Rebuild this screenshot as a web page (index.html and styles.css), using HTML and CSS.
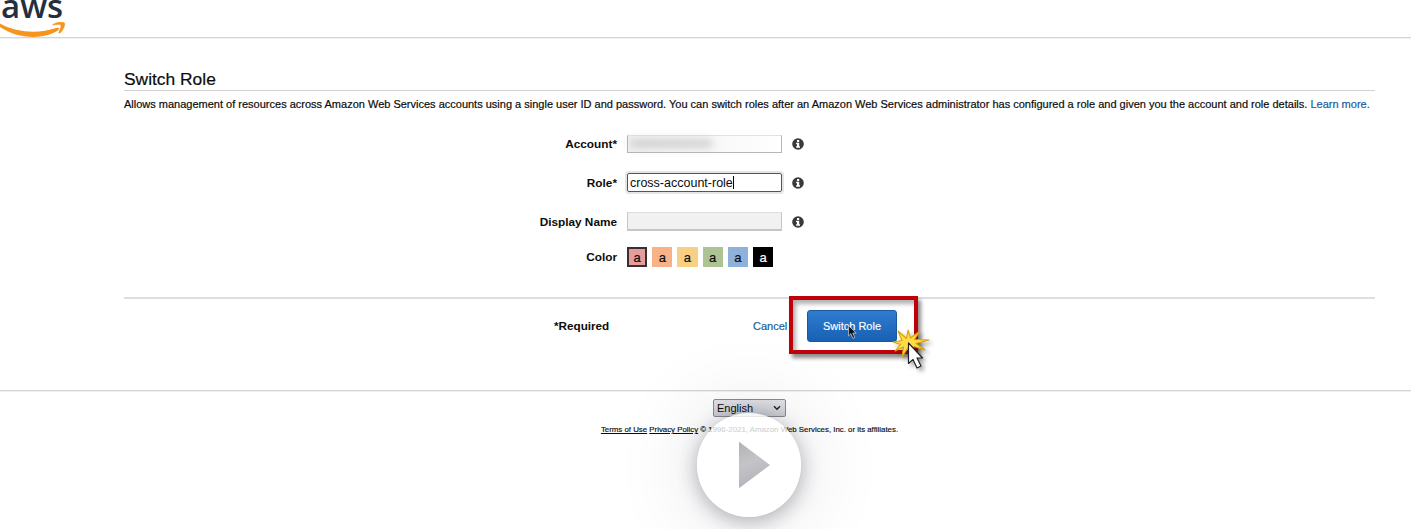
FILE: index.html
```html
<!DOCTYPE html>
<html lang="en">
<head>
<meta charset="utf-8">
<title>Switch Role</title>
<link rel="stylesheet" href="styles.css">
</head>
<body>
<svg class="symbols" aria-hidden="true">
  <symbol id="info" viewBox="0 0 12 12"><circle cx="6" cy="6" r="5.8" fill="#3a3a3a"/><path d="M5 2.100h2.200v1.800H5zM4.100 4.800h3.100v3.500H8v1.400H4.100V8.300H5V6.200h-.9z" fill="#fff"/></symbol>
</svg>
<header class="header">
  <span class="logo-text">aws</span>
  <svg class="smile" viewBox="0 0 66 18" width="66" height="18">
    <path d="M0 3.500C17 13 39 14 56 8c3-1 4 1 2 2.500C43 20 17 19 0 7z" fill="#f7941d"/>
    <path d="M53 4.500c4-3 11-2.500 11.500-1.500.8 2-1 7-4.500 10-1 .5-1.500 0-1-1 1-2.500 2.500-6 1.800-7-1-.8-5-.5-7 0-1.200.2-1.500 0-.8-.5z" fill="#f7941d" stroke="#f7941d" stroke-width=".5"/>
  </svg>
</header>
<main class="main">
  <h1 class="title">Switch Role</h1>
  <p class="intro">Allows management of resources across Amazon Web Services accounts using a single user ID and password. You can switch roles after an Amazon Web Services administrator has configured a role and given you the account and role details. <a class="link">Learn more.</a></p>
  <form class="form">
    <div class="row">
      <label class="label">Account*</label>
      <div class="field field-account"><i class="smudge"></i></div>
      <svg class="info"><use href="#info"/></svg>
    </div>
    <div class="row">
      <label class="label">Role*</label>
      <div class="field field-active">cross-account-role<i class="caret"></i></div>
      <svg class="info"><use href="#info"/></svg>
    </div>
    <div class="row">
      <label class="label">Display Name</label>
      <div class="field field-display"></div>
      <svg class="info"><use href="#info"/></svg>
    </div>
    <div class="row row-color">
      <label class="label">Color</label>
      <div class="swatches">
        <span class="swatch red">a</span><span class="swatch orange">a</span><span class="swatch yellow">a</span><span class="swatch green">a</span><span class="swatch blue">a</span><span class="swatch black">a</span>
      </div>
    </div>
  </form>
  <div class="actions">
    <b class="required">*Required</b>
    <a class="link cancel">Cancel</a>
    <div class="button">Switch Role
      <svg class="pointer-small" width="9" height="15" viewBox="0 0 9 15"><path d="M.6.7v10.200l2.300-2.200 2 4.700 1.900-.8-2-4.500h3.400z" fill="#111" stroke="#ddd" stroke-width=".7"/></svg>
      <div class="highlight"></div>
      <svg class="click" width="46" height="52" viewBox="0 0 46 52">
        <path d="M8 7l8.500 7.500L18 6l2.500 8L30 7l-5.500 8.500L39 16l-13 3.500 9 6.500-11-3.500-2 6-3.500-5.500L12 33l1.500-10L5 27l5.500-6.500L3 18l9-1.500z" fill="#ffdb45" stroke="#dba206" stroke-width="1.100" stroke-linejoin="round"/>
        <path d="M18.500 19v20.500l4.500-4 4 8.500 4-2-4-8h5.500z" fill="#fff" stroke="#222" stroke-width="1.200" stroke-linejoin="round"/>
      </svg>
    </div>
  </div>
</main>
<footer class="footer">
  <div class="select">English<svg width="8" height="6" viewBox="0 0 8 6"><path d="M1 1.300l3 3 3-3" fill="none" stroke="#222" stroke-width="1.400"/></svg></div>
  <p class="legal"><u>Terms of Use</u> <u>Privacy Policy</u> © 1996-2021, Amazon Web Services, Inc. or its affiliates.</p>
</footer>
<div class="play"><svg width="32" height="48" viewBox="0 0 32 48"><defs><linearGradient id="tri" x1="0" y1="0" x2="0.300" y2="1"><stop offset="0" stop-color="#b2b2b6"/><stop offset=".5" stop-color="#c4c4c8"/><stop offset="1" stop-color="#b2b2b9"/></linearGradient></defs><path d="M0 .7l31 23.300L0 47.300z" fill="url(#tri)"/></svg></div>
</body>
</html>
```
FILE: styles.css
```css
* { box-sizing: border-box; }
body {
  position: relative;
  margin: 0;
  height: 529px;
  overflow: hidden;
  background: #fff;
  color: #0c0c0c;
  font-family: "Liberation Sans", Arial, sans-serif;
  font-size: 11px;
}
.symbols { display: none; }
.header {
  position: relative;
  height: 38px;
  border-bottom: 1px solid #d4d4d4;
  box-shadow: 0 1px #f1f1f1;
}
.logo-text {
  position: absolute;
  left: 1px;
  top: -18px;
  font: 600 33px/48px "Open Sans", sans-serif;
  color: #252f3e;
}
.smile { position: absolute; left: 0; top: 20px; }
.main { padding: 32px 36px 0 124px; height: 352px; }
.title {
  margin: 0;
  height: 21px;
  border-bottom: 1px solid #d2d2d2;
  font-size: 17.400px;
  font-weight: 400;
  line-height: 19px;
  -webkit-text-stroke: .2px;
}
.intro { margin: 5px 0 0; font-size: 11.010px; line-height: 17px; white-space: nowrap; -webkit-text-stroke: .2px; }
.link { color: #1a5c9c; }
.form { padding-top: 11px; height: 186px; border-bottom: 2px solid #dedede; }
.row { display: flex; align-items: center; height: 39px; }
.label { width: 493px; text-align: right; font-size: 11.800px; font-weight: 700; margin-right: 10px; }
.field {
  position: relative;
  display: flex;
  align-items: center;
  width: 155px;
  height: 19px;
  padding-left: 2px;
  border: 1px solid #b5b5b5;
  font-size: 12.500px;
}
.field-account { height: 18px; border-top-color: #e2e2e2; background: linear-gradient(90deg, #f2f2f2, #fafafa 70%, #fff); }
.field-display { border: 1px solid #c6c6c6; border-top-color: #ddd; border-bottom-width: 2px; background: #f1f1f1; }
.field-active { border: 1px solid #555; border-radius: 2px; box-shadow: 0 0 0 2px #e5e5e5; }
.smudge { width: 82px; height: 7px; background: #c7c7c7; filter: blur(4px); }
.caret { width: 1px; height: 13px; background: #000; }
.info { width: 12px; height: 12px; margin-left: 10px; }
.row-color { height: 31px; }
.swatches { display: flex; gap: 5px; }
.swatch { width: 20.200px; height: 20px; text-align: center; font-size: 13px; line-height: 21px; -webkit-text-stroke: .2px; }
.red { background: #e79c9c; border: 2px solid #383030; line-height: 17px; }
.orange { background: #f7b287; }
.yellow { background: #f7d083; }
.green { background: #aec393; }
.blue { background: #8eb1dc; }
.black { background: #000; color: #fff; }
.actions { display: flex; align-items: center; height: 53px; padding-left: 430px; }
.required { width: 199px; font-size: 11.700px; }
.cancel { width: 54px; -webkit-text-stroke: .2px; }
.button {
  position: relative;
  width: 90px;
  height: 32px;
  border: 1px solid #185a9f;
  border-radius: 3px;
  background: linear-gradient(#2f7dd0, #1860b4);
  color: #fff;
  line-height: 30px;
  text-align: center;
  -webkit-text-stroke: .15px;
}
.pointer-small { position: absolute; left: 40px; top: 14px; }
.highlight {
  position: absolute;
  left: -19px;
  top: -15px;
  width: 129px;
  height: 58px;
  border: 4px solid #c00008;
  box-shadow: 3px 4px 4px rgba(0,0,0,.45), inset 3px 4px 4px rgba(0,0,0,.3);
}
.click { position: absolute; left: 82px; top: 13px; filter: drop-shadow(3px 3px 2px rgba(0,0,0,.35)); }
.footer {
  display: flex;
  flex-direction: column;
  align-items: center;
  height: 139px;
  padding: 8px 0 0 88px;
  border-top: 1px solid #d6d6d6;
  box-shadow: inset 0 1px #efefef;
}
.select {
  display: flex;
  align-items: center;
  justify-content: space-between;
  width: 73px;
  height: 18px;
  padding: 0 4px 0 3px;
  border: 1px solid #8a8a91;
  border-radius: 2px;
  background: linear-gradient(#e2e2e7, #cfcfd6);
  font-size: 11px;
}
.legal { margin: 7px 0 0; font-size: 7.850px; line-height: 11px; white-space: nowrap; -webkit-text-stroke: .15px; }
.play {
  position: absolute;
  left: 697px;
  top: 413px;
  display: flex;
  align-items: center;
  width: 104px;
  height: 104px;
  padding-left: 42px;
  border-radius: 50%;
  background: rgba(255,255,255,.8);
  box-shadow: 0 4px 20px rgba(20,20,45,.32), 0 0 90px rgba(20,20,40,.14);
}
```
